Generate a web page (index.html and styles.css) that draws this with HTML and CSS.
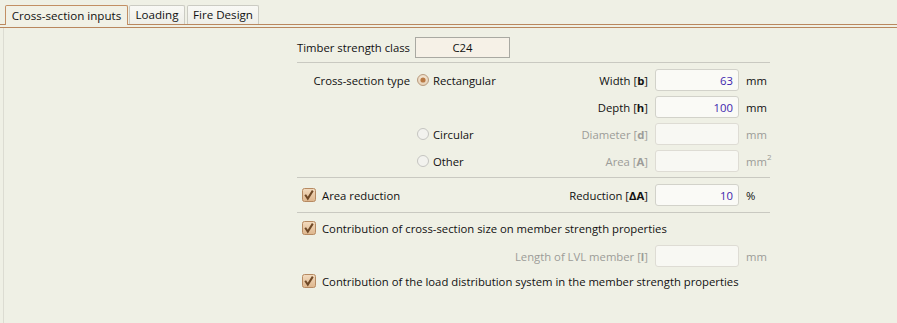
FILE: index.html
```html
<!DOCTYPE html>
<html>
<head>
<meta charset="utf-8">
<link rel="stylesheet" href="styles.css">
</head>
<body>
<div class="tabs">
  <div class="tab active">Cross-section inputs</div>
  <div class="tab t-loading">Loading</div>
  <div class="tab t-fire">Fire Design</div>
</div>
<div class="tabline"></div>
<div class="panel">
  <div class="form">
    <div class="row-class">
      <span class="lbl">Timber strength class</span>
      <span class="classbox">C24</span>
    </div>
    <div class="sep"></div>
    <div class="grid">
      <span class="type-lbl">Cross-section type</span>
      <span class="opt"><svg class="radio" width="12" height="12" viewBox="0 0 12 12"><defs><radialGradient id="rg" cx="50%" cy="40%" r="60%"><stop offset="0" stop-color="#fbf1e2"/><stop offset="1" stop-color="#e3cdb2"/></radialGradient></defs><circle cx="6" cy="6" r="5.5" fill="url(#rg)" stroke="#b99d80"/><circle cx="6" cy="6" r="2.6" fill="#b97a45"/></svg>Rectangular</span>
      <span class="flbl">Width [<b>b</b>]</span>
      <span class="inp val">63</span>
      <span class="unit">mm</span>

      <span></span>
      <span></span>
      <span class="flbl">Depth [<b>h</b>]</span>
      <span class="inp val">100</span>
      <span class="unit">mm</span>

      <span></span>
      <span class="opt"><svg class="radio" width="12" height="12" viewBox="0 0 12 12"><circle cx="6" cy="6" r="5.5" fill="#f2f2ee" stroke="#c4c4c0"/></svg>Circular</span>
      <span class="flbl dis">Diameter [<b>d</b>]</span>
      <span class="inp off"></span>
      <span class="unit dis">mm</span>

      <span></span>
      <span class="opt"><svg class="radio" width="12" height="12" viewBox="0 0 12 12"><circle cx="6" cy="6" r="5.5" fill="#f2f2ee" stroke="#c4c4c0"/></svg>Other</span>
      <span class="flbl dis">Area [<b>A</b>]</span>
      <span class="inp off"></span>
      <span class="unit dis">mm<sup>2</sup></span>
    </div>
    <div class="sep sep2"></div>
    <div class="grid grid-red">
      <span class="chk-wrap"><svg class="chk" width="14" height="14" viewBox="0 0 14 14"><defs><linearGradient id="cg" x1="0" y1="0" x2="0" y2="1"><stop offset="0" stop-color="#f3dcc0"/><stop offset="1" stop-color="#ddb58c"/></linearGradient></defs><rect x="0.5" y="0.5" width="13" height="13" rx="2" fill="url(#cg)" stroke="#b68a62"/><path d="M3.2 6.8 L5.8 10.6 L10.8 2.6" fill="none" stroke="#6e4826" stroke-width="2"/></svg>Area reduction</span>
      <span class="flbl">Reduction [<b>ΔA</b>]</span>
      <span class="inp val">10</span>
      <span class="unit">%</span>
    </div>
    <div class="sep sep3"></div>
    <div class="chk-row"><svg class="chk" width="14" height="14" viewBox="0 0 14 14"><rect x="0.5" y="0.5" width="13" height="13" rx="2" fill="url(#cg)" stroke="#b68a62"/><path d="M3.2 6.8 L5.8 10.6 L10.8 2.6" fill="none" stroke="#6e4826" stroke-width="2"/></svg>Contribution of cross-section size on member strength properties</div>
    <div class="grid grid-lvl">
      <span class="flbl dis">Length of LVL member [<b>l</b>]</span>
      <span class="inp off"></span>
      <span class="unit dis">mm</span>
    </div>
    <div class="chk-row last"><svg class="chk" width="14" height="14" viewBox="0 0 14 14"><rect x="0.5" y="0.5" width="13" height="13" rx="2" fill="url(#cg)" stroke="#b68a62"/><path d="M3.2 6.8 L5.8 10.6 L10.8 2.6" fill="none" stroke="#6e4826" stroke-width="2"/></svg>Contribution of the load distribution system in the member strength properties</div>
  </div>
</div>
</body>
</html>
```

FILE: styles.css
```css
html, body {
  margin: 0;
  padding: 0;
  background: #eff0e5;
  height: 100%;
}
body {
  font-family: "Open Sans", "Noto Sans", sans-serif;
  font-size: 11.3px;
  color: #111111;
  overflow: hidden;
}
.tabs {
  display: flex;
  padding: 5px 0 0 5px;
  height: 19px;
  gap: 2px;
}
.tab {
  box-sizing: border-box;
  height: 19px;
  border: 1px solid #cbcbc3;
  border-bottom: none;
  border-radius: 2px 2px 0 0;
  background: linear-gradient(#f9f9f5, #eeeee8);
  display: flex;
  align-items: center;
  justify-content: center;
  line-height: 1;
  font-size: 11.6px;
}
.tab.active {
  width: 123px;
  border-color: #c28f64;
  background: #f1f1e6;
  height: 20px;
  margin-right: -1px;
}
.t-loading { width: 56px; }
.t-fire { width: 72px; }
.tabline {
  height: 2px;
  border-top: 1px solid #b9875e;
  border-bottom: 1px solid #b9875e;
}
.panel {
  margin-left: 3px;
  border-left: 1px solid #dcdcd2;
  height: 295px;
}
.form {
  margin-left: 293px;
  width: 473px;
  padding-top: 9px;
}
.row-class {
  display: flex;
  align-items: center;
  gap: 4px;
  height: 21px;
}
.lbl { width: 114px; white-space: nowrap; }
.classbox {
  box-sizing: border-box;
  width: 95px;
  height: 21px;
  border: 1px solid #a9a9a2;
  background: #f6f1e7;
  display: flex;
  align-items: center;
  justify-content: center;
}
.sep {
  height: 1px;
  background: #c9c9c1;
  margin-top: 4px;
}
.grid {
  display: grid;
  grid-template-columns: 113px 1fr auto 84px 24px;
  column-gap: 7px;
  row-gap: 5px;
  grid-auto-rows: 22px;
  align-items: center;
  margin-top: 6px;
}
.type-lbl { text-align: right; white-space: nowrap; }
.opt { display: flex; align-items: center; gap: 4px; }
.radio { flex: none; }
.flbl { text-align: right; white-space: nowrap; }
.flbl b { font-weight: 700; }
.dis { color: #9c9c98; }
.inp {
  box-sizing: border-box;
  height: 22px;
  border: 1px solid #d2d2ca;
  border-radius: 3px;
  background: #fafaf6;
  display: flex;
  align-items: center;
  justify-content: flex-end;
  padding-right: 5px;
}
.inp.off { border-color: #dedcd4; background: #f8f8f3; }
.val { color: #3d1fae; }
.unit { white-space: nowrap; }
.unit sup { font-size: 8px; vertical-align: 6px; line-height: 0; }
.sep2 { margin-top: 5px; }
.grid-red {
  grid-template-columns: 1fr auto 84px 24px;
  margin-top: 6px;
}
.chk-wrap, .chk-row {
  display: flex;
  align-items: center;
  gap: 6px;
  padding-left: 5px;
  white-space: nowrap;
}
.chk { flex: none; }
.sep3 { margin-top: 6px; }
.chk-row { height: 20px; margin-top: 5px; }
.grid-lvl {
  grid-template-columns: 1fr 84px 24px;
  margin-top: 7px;
}
.chk-row.last { margin-top: 4px; }
```
